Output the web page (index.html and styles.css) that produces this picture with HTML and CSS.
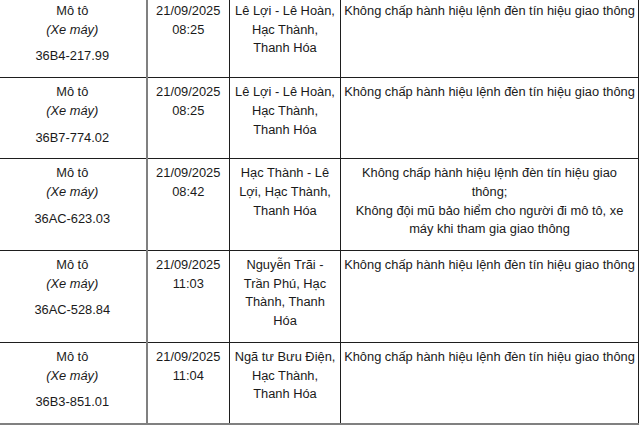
FILE: index.html
```html
<!DOCTYPE html>
<html lang="vi">
<head>
<meta charset="utf-8">
<link rel="stylesheet" href="styles.css">
</head>
<body>
<table class="fines">
  <colgroup>
    <col class="c-veh">
    <col class="c-time">
    <col class="c-place">
    <col class="c-act">
  </colgroup>
  <tbody>
    <tr>
      <td class="veh"><p>Mô tô<br><em>(Xe máy)</em></p><p>36B4-217.99</p></td>
      <td><p>21/09/2025<br>08:25</p></td>
      <td><p>Lê Lợi - Lê Hoàn, Hạc Thành, Thanh Hóa</p></td>
      <td class="act"><p>Không chấp hành hiệu lệnh đèn tín hiệu giao thông</p></td>
    </tr>
    <tr>
      <td class="veh"><p>Mô tô<br><em>(Xe máy)</em></p><p>36B7-774.02</p></td>
      <td><p>21/09/2025<br>08:25</p></td>
      <td><p>Lê Lợi - Lê Hoàn, Hạc Thành, Thanh Hóa</p></td>
      <td class="act"><p>Không chấp hành hiệu lệnh đèn tín hiệu giao thông</p></td>
    </tr>
    <tr>
      <td class="veh"><p>Mô tô<br><em>(Xe máy)</em></p><p>36AC-623.03</p></td>
      <td><p>21/09/2025<br>08:42</p></td>
      <td><p>Hạc Thành - Lê Lợi, Hạc Thành, Thanh Hóa</p></td>
      <td class="act"><p>Không chấp hành hiệu lệnh đèn tín hiệu giao thông;<br>Không đội mũ bảo hiểm cho người đi mô tô, xe máy khi tham gia giao thông</p></td>
    </tr>
    <tr>
      <td class="veh"><p>Mô tô<br><em>(Xe máy)</em></p><p>36AC-528.84</p></td>
      <td><p>21/09/2025<br>11:03</p></td>
      <td><p>Nguyễn Trãi - Trần Phú, Hạc Thành, Thanh Hóa</p></td>
      <td class="act"><p>Không chấp hành hiệu lệnh đèn tín hiệu giao thông</p></td>
    </tr>
    <tr class="last">
      <td class="veh"><p>Mô tô<br><em>(Xe máy)</em></p><p>36B3-851.01</p></td>
      <td><p>21/09/2025<br>11:04</p></td>
      <td><p>Ngã tư Bưu Điện, Hạc Thành, Thanh Hóa</p></td>
      <td class="act"><p>Không chấp hành hiệu lệnh đèn tín hiệu giao thông</p></td>
    </tr>
  </tbody>
</table>
</body>
</html>
```
FILE: styles.css
```css
html, body {
  margin: 0;
  padding: 0;
  background: #ffffff;
}
body {
  font-family: "Liberation Sans", Arial, sans-serif;
  font-size: 12.85px;
  line-height: 18.7px;
  color: #1a1a1a;
  overflow: hidden;
}
.fines {
  border-collapse: collapse;
  table-layout: fixed;
  width: 640px;
  margin: -4px 0 0 -2px;
}
.c-veh { width: 148px; }
.c-time { width: 83px; }
.c-place { width: 111px; }
.c-act { width: 298px; }
.fines td {
  border: 1px solid #1e1e1e;
  padding: 5px 3px 3px;
  text-align: center;
  vertical-align: top;
}
.fines td.act {
  padding-left: 2px;
  padding-right: 2px;
}
.fines td.veh {
  border-right: 2px solid #808080;
}
.fines tr.last td {
  border-bottom: 2px solid #808080;
}
.fines p {
  margin: 0 0 8px;
}
.fines em {
  font-style: italic;
}
```
